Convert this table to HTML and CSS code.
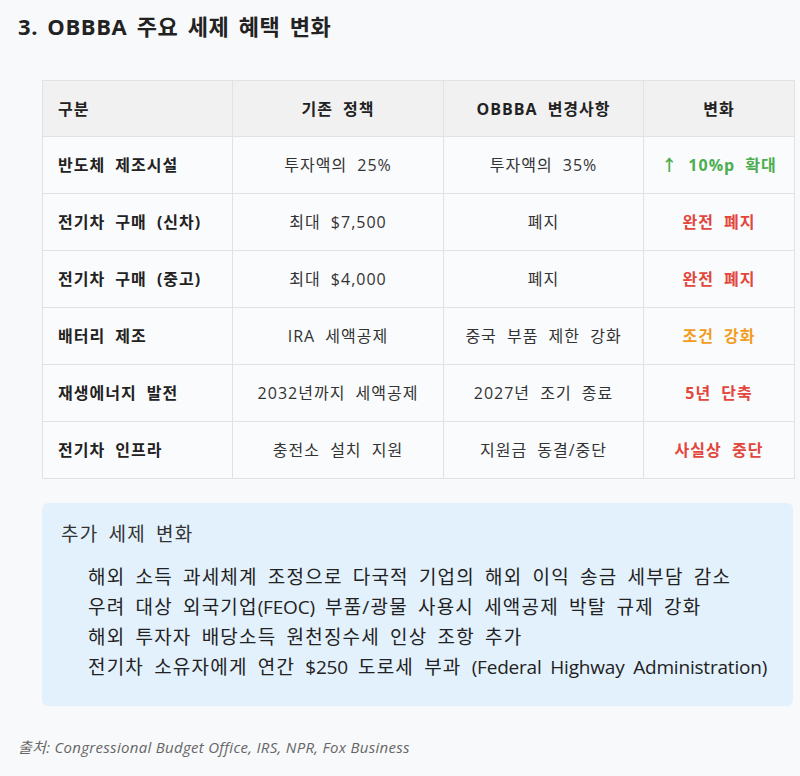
FILE: index.html
```html
<!DOCTYPE html>
<html lang="ko">
<head>
<meta charset="utf-8">
<link rel="stylesheet" href="styles.css">
</head>
<body>
<div class="page">
  <h2 class="title">3. OBBBA 주요 세제 혜택 변화</h2>
  <table class="tbl">
    <colgroup>
      <col class="c1"><col class="c2"><col class="c3"><col class="c4">
    </colgroup>
    <thead>
      <tr><th class="left">구분</th><th>기존 정책</th><th>OBBBA 변경사항</th><th>변화</th></tr>
    </thead>
    <tbody>
      <tr><td class="left">반도체 제조시설</td><td>투자액의 25%</td><td>투자액의 35%</td><td class="green">↑ 10%p 확대</td></tr>
      <tr><td class="left">전기차 구매 (신차)</td><td>최대 $7,500</td><td>폐지</td><td class="red">완전 폐지</td></tr>
      <tr><td class="left">전기차 구매 (중고)</td><td>최대 $4,000</td><td>폐지</td><td class="red">완전 폐지</td></tr>
      <tr><td class="left">배터리 제조</td><td>IRA 세액공제</td><td>중국 부품 제한 강화</td><td class="orange">조건 강화</td></tr>
      <tr><td class="left">재생에너지 발전</td><td>2032년까지 세액공제</td><td>2027년 조기 종료</td><td class="red">5년 단축</td></tr>
      <tr><td class="left">전기차 인프라</td><td>충전소 설치 지원</td><td>지원금 동결/중단</td><td class="red">사실상 중단</td></tr>
    </tbody>
  </table>
  <div class="note">
    <div class="note-title">추가 세제 변화</div>
    <ul class="note-list">
      <li>해외 소득 과세체계 조정으로 다국적 기업의 해외 이익 송금 세부담 감소</li>
      <li>우려 대상 외국기업<span class="en">(FEOC)</span> 부품/광물 사용시 세액공제 박탈 규제 강화</li>
      <li>해외 투자자 배당소득 원천징수세 인상 조항 추가</li>
      <li>전기차 소유자에게 연간 <span class="en">$250</span> 도로세 부과 <span class="en">(Federal Highway Administration)</span></li>
    </ul>
  </div>
  <p class="source">출처: Congressional Budget Office, IRS, NPR, Fox Business</p>
</div>
</body>
</html>
```
FILE: styles.css
```css
html, body {
  margin: 0;
  padding: 0;
  background: #f8f9fa;
}
body {
  font-family: "Open Sans", "Noto Sans CJK KR", sans-serif;
  color: #222;
}
.page {
  padding: 0 0 0 18px;
  width: 776px;
}
.title {
  margin: 0;
  padding-top: 10px;
  font-size: 22px;
  line-height: 32px;
  font-weight: 700;
  color: #222;
  letter-spacing: 0.6px;
  word-spacing: 3px;
}
.tbl {
  margin: 38px 0 0 24px;
  width: 752px;
  border-collapse: collapse;
  table-layout: fixed;
  font-size: 16px;
  letter-spacing: 1px;
  word-spacing: 5px;
  background: #fafbfc;
}
.c1 { width: 190px; }
.c2 { width: 211px; }
.c3 { width: 200px; }
.c4 { width: 151px; }
.tbl th, .tbl td {
  border: 1px solid #e1e2e4;
  text-align: center;
  vertical-align: middle;
  padding: 0 15px;
  line-height: 24px;
  white-space: nowrap;
}
.tbl th {
  height: 55px;
  background: #f1f1f2;
  font-weight: 700;
  color: #222;
}
.tbl td {
  height: 56px;
  color: #333;
}
.tbl .left {
  text-align: left;
}
.tbl td.left {
  font-weight: 700;
  color: #222;
}
.green { color: #4cae50 !important; font-weight: 700; }
.red { color: #e2463c !important; font-weight: 700; }
.orange { color: #f29c1f !important; font-weight: 700; }
.note {
  margin: 24px 0 0 24px;
  width: 751px;
  box-sizing: border-box;
  background: #e3f1fc;
  border-radius: 6px;
  padding: 18px 19px 24px 19px;
  letter-spacing: 1.2px;
  word-spacing: 4px;
}
.note-title {
  font-size: 19px;
  line-height: 26px;
  color: #333;
}
.note-list {
  list-style: none;
  margin: 15px 0 0 0;
  padding: 0 0 0 27px;
  font-size: 19px;
  line-height: 30px;
  color: #222;
  white-space: nowrap;
}
.note-list .en {
  letter-spacing: -0.2px;
}
.source {
  margin: 31px 0 0 0;
  font-size: 15px;
  line-height: 20px;
  font-style: italic;
  color: #666;
  letter-spacing: 0.3px;
}
```
